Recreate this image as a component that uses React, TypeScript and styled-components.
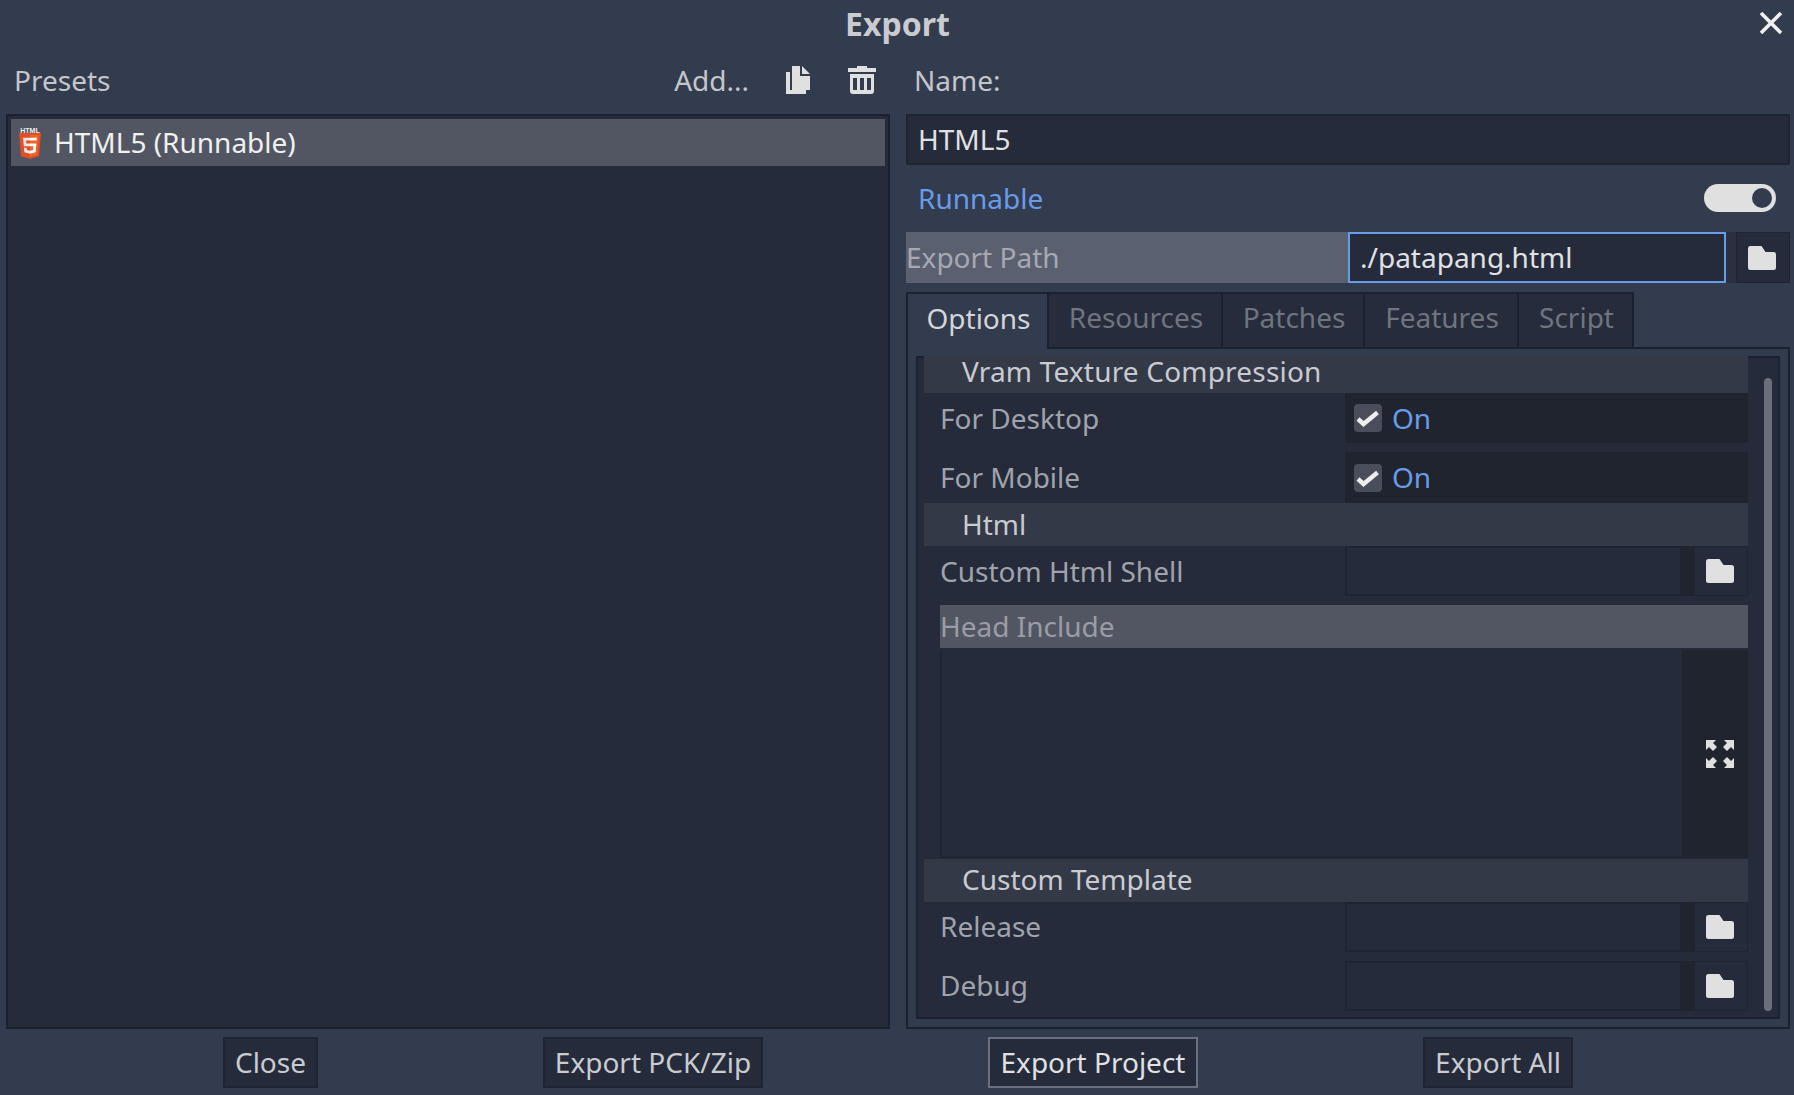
import React from "react";
import styled, { createGlobalStyle } from "styled-components";

const Global = createGlobalStyle`
  html, body { margin: 0; padding: 0; background: #333b4f; }
  * { box-sizing: border-box; }
`;

const Page = styled.div`
  width: 1794px;
  height: 1095px;
  background: #333b4f;
  color: #d4d5d8;
  font-family: "Noto Sans", sans-serif;
  font-size: 28px;
  line-height: 36px;
  display: flex;
  flex-direction: column;
  overflow: hidden;
`;

const TitleBar = styled.div`
  height: 48px;
  display: grid;
  grid-template-columns: 1fr auto 1fr;
  align-items: center;
`;

const Title = styled.div`
  grid-column: 2;
  font-weight: 700;
  font-size: 32px;
  color: #c9cbd0;
  padding: 0 0 1px 1px;
`;

const CloseButton = styled.div`
  justify-self: end;
  display: flex;
  margin: -2px 11px 0 0;
`;

const Main = styled.div`
  display: grid;
  grid-template-columns: 884px 884px;
  column-gap: 16px;
  padding: 0 4px 0 6px;
  height: 981px;
`;

const Column = styled.div`
  display: flex;
  flex-direction: column;
  min-width: 0;
`;

const HeaderRow = styled.div`
  height: 66px;
  display: flex;
  align-items: center;
  padding: 0 0 2px 8px;
  color: #c4c6cb;
`;

const NameLabel = styled.div`
  height: 66px;
  display: flex;
  align-items: center;
  padding: 0 0 2px 8px;
  color: #c4c6cb;
`;

const Spacer = styled.div`
  flex: 1;
`;

const AddLabel = styled.div`
  margin-right: 37px;
`;

const ToolIcon = styled.div<{ $right: number }>`
  display: flex;
  margin-right: ${(p) => p.$right}px;
`;

const ListPanel = styled.div`
  flex: 1;
  background: #252b3b;
  border: 2px solid #1c2130;
  padding: 3px;
`;

const PresetItem = styled.div`
  height: 47px;
  background: #525663;
  display: flex;
  align-items: center;
  padding: 0 0 2px 7px;
  color: #f0f0f1;
  gap: 12px;
`;

const LogoSlot = styled.div`
  display: flex;
  margin-bottom: -2px;
`;

const LineInput = styled.div`
  height: 51px;
  background: #252b3b;
  border: 2px solid #1f2433;
  display: flex;
  align-items: center;
  padding: 0 0 2px 10px;
  color: #e0e1e4;
`;

const RunnableRow = styled.div`
  height: 67px;
  display: flex;
  align-items: center;
  justify-content: space-between;
  padding: 0 14px 2px 12px;
  color: #699ce8;
`;

const Toggle = styled.div`
  width: 72px;
  height: 28px;
  border-radius: 14px;
  background: #e0e0e0;
  display: flex;
  align-items: center;
  justify-content: flex-end;
  padding-right: 4px;
`;

const ToggleKnob = styled.div`
  width: 20px;
  height: 20px;
  border-radius: 50%;
  background: #333b4f;
`;

const PathRow = styled.div`
  height: 51px;
  display: grid;
  grid-template-columns: 442px 378px 10px 54px;
`;

const PathLabel = styled.div`
  background: #5b6071;
  color: #a6a9b1;
  display: flex;
  align-items: center;
  padding-bottom: 2px;
`;

const PathInput = styled.div`
  background: #252b3b;
  border: 2px solid #699ce8;
  display: flex;
  align-items: center;
  padding: 0 0 2px 10px;
  color: #e0e1e4;
`;

const ButtonGap = styled.div`
  background: #2a3041;
`;

const IconButton = styled.div`
  background: #252b3b;
  border: 1px solid #1f2433;
  display: flex;
  align-items: center;
  justify-content: center;
  padding-right: 2px;
`;

const TabBar = styled.div`
  display: flex;
  height: 55px;
  margin-top: 9px;
`;

const Tab = styled.div<{ $active?: boolean; $w: number }>`
  width: ${(p) => p.$w}px;
  background: ${(p) => (p.$active ? "#333b4f" : "#262c3c")};
  color: ${(p) => (p.$active ? "#d4d5d8" : "#6f7480")};
  border: 2px solid #1c2130;
  border-bottom: 0;
  border-left-width: ${(p) => (p.$active ? 2 : 0)}px;
  display: flex;
  align-items: center;
  justify-content: center;
  padding: 0 0 8px 2px;
  position: relative;
  margin-bottom: ${(p) => (p.$active ? -2 : 0)}px;
  z-index: ${(p) => (p.$active ? 1 : 0)};
`;

const TabPanel = styled.div`
  flex: 1;
  border: 2px solid #1c2130;
  padding: 7px 8px 8px;
  display: flex;
  min-height: 0;
`;

const Inner = styled.div`
  flex: 1;
  display: flex;
  background: #252b3b;
  border: 2px solid #1c2130;
  padding: 0 6px 0 6px;
  min-width: 0;
`;

const PropertyList = styled.div`
  width: 824px;
  margin-top: -2px;
  display: flex;
  flex-direction: column;
`;

const SectionHeader = styled.div<{ $h: number; $pb: number; $spacing?: number }>`
  height: ${(p) => p.$h}px;
  flex: none;
  background: #343948;
  color: #c9cbd0;
  display: flex;
  align-items: center;
  letter-spacing: ${(p) => p.$spacing ?? 0}px;
  padding: 0 0 ${(p) => p.$pb}px 38px;
`;

const PropRow = styled.div<{ $h: number; $mt?: number }>`
  height: ${(p) => p.$h}px;
  margin-top: ${(p) => p.$mt ?? 0}px;
  flex: none;
  display: grid;
  grid-template-columns: 421px 403px;
`;

const PropLabel = styled.div<{ $pb: number }>`
  display: flex;
  align-items: center;
  padding: 0 0 ${(p) => p.$pb}px 16px;
  color: #a0a3ab;
`;

const CheckValue = styled.div`
  background: #20242f;
  display: flex;
  align-items: center;
  padding-left: 9px;
  color: #699ce8;
  gap: 10px;
`;

const OnLabel = styled.span`
  margin-bottom: 1px;
`;

const CheckBox = styled.div`
  width: 28px;
  height: 28px;
  border-radius: 4px;
  background: #4a4e5b;
  display: flex;
`;

const PathValue = styled.div`
  display: grid;
  grid-template-columns: 337px 12px 54px;
  background: #20242f;
`;

const EmptyInput = styled.div`
  background: #252b3b;
  border: 2px solid #1f2433;
  grid-column: 1;
`;

const SmallIconButton = styled.div`
  grid-column: 3;
  background: #252b3b;
  border: 1px solid #1f2433;
  display: flex;
  align-items: center;
  justify-content: center;
  padding-right: 2px;
`;

const BlockLabel = styled.div`
  height: 43px;
  margin: 9px 0 0 16px;
  flex: none;
  background: #525663;
  color: #9a9da5;
  display: flex;
  align-items: center;
  padding-bottom: 2px;
`;

const TextAreaRow = styled.div`
  height: 208px;
  margin: 2px 0 1px 16px;
  flex: none;
  display: grid;
  grid-template-columns: 742px 66px;
`;

const TextArea = styled.div`
  background: #252b3b;
  border-left: 2px solid #1f2433;
  border-bottom: 2px solid #1f2433;
`;

const TextAreaSide = styled.div`
  background: #20242f;
  display: flex;
  align-items: center;
  justify-content: center;
  padding-left: 10px;
`;

const Scrollbar = styled.div`
  width: 8px;
  margin: 20px 0 6px 16px;
  border-radius: 4px;
  background: #6b6f7a;
`;

const Footer = styled.div`
  display: flex;
  gap: 225px;
  padding-left: 223px;
  margin-top: 8px;
`;

const FooterButton = styled.div<{ $w: number; $focus?: boolean }>`
  width: ${(p) => p.$w}px;
  height: 51px;
  background: #252b3b;
  border: 2px solid ${(p) => (p.$focus ? "#6b7080" : "#1f2433")};
  color: ${(p) => (p.$focus ? "#e0e1e4" : "#c9cbd0")};
  display: flex;
  align-items: center;
  justify-content: center;
  padding-bottom: 2px;
`;

const Folder = () => (
  <svg width="28" height="24" viewBox="0 0 28 24">
    <path fill="#e0e0e0" d="M0 2.5A2.5 2.5 0 0 1 2.500 0H13.500L17.500 6H25.500A2.500 2.500 0 0 1 28 8.500V21.500A2.500 2.500 0 0 1 25.500 24H2.500A2.500 2.500 0 0 1 0 21.500z" />
  </svg>
);

const CloseIcon = () => (
  <svg width="24" height="22" viewBox="0 0 24 22">
    <path stroke="#f0f0f0" strokeWidth="3.6" d="M2 1l20 20M22 1L2 21" />
  </svg>
);

const CopyIcon = () => (
  <svg width="24" height="28" viewBox="0 0 24 28">
    <path fill="#e0e0e0" d="M6 0h8v10h10v14H6zM16 0l8 8h-8zM0 6h4v18h16v4H0z" />
  </svg>
);

const TrashIcon = () => (
  <svg width="28" height="28" viewBox="0 0 28 28">
    <path fill="#e0e0e0" d="M9 0h10v2h9v4H0V2h9z" />
    <path
      fill="#e0e0e0"
      fillRule="evenodd"
      d="M2 8h24v17a3 3 0 0 1-3 3H5a3 3 0 0 1-3-3zM5 12v12h4V12zM12 12v12h4V12zM19 12v12h4V12z"
    />
  </svg>
);

const CheckMark = () => (
  <svg width="28" height="28" viewBox="0 0 28 28">
    <path fill="none" stroke="#eeeeee" strokeWidth="4.4" d="M4 15l5.500 5L23.500 8.500" />
  </svg>
);

const ExpandIcon = () => (
  <svg width="28" height="28" viewBox="0 0 28 28">
    <g fill="#e0e0e0">
      <path d="M0 0h10L7 3l4 4-4 4-4-4-3 3z" />
      <path d="M28 0H18l3 3-4 4 4 4 4-4 3 3z" />
      <path d="M0 28h10l-3-3 4-4-4-4-4 4-3-3z" />
      <path d="M28 28H18l3-3-4-4 4-4 4 4 3-3z" />
    </g>
  </svg>
);

const Html5Logo = () => (
  <svg width="24" height="32" viewBox="0 0 24 32">
    <text x="12" y="5.500" textAnchor="middle" fontFamily="Liberation Sans" fontWeight="700" fontSize="7" fill="#eeeeee">
      HTML
    </text>
    <g transform="translate(1 6) scale(.0606 .0625) translate(-74.6 -100.6)">
      <polygon fill="#E44D26" points="107.644,470.877 74.633,100.620 437.367,100.620 404.321,470.819 255.778,512" />
      <polygon fill="#F16529" points="256,480.523 376.030,447.246 404.270,130.894 256,130.894" />
      <polygon
        fill="#EBEBEB"
        points="256,268.217 195.910,268.217 191.760,221.716 256,221.716 256,176.305 142.132,176.305 143.219,188.488 154.380,313.627 256,313.627"
      />
      <polygon
        fill="#EBEBEB"
        points="256,386.153 255.801,386.209 205.227,372.551 201.994,336.333 156.409,336.333 162.771,407.634 255.791,433.457 256,433.399"
      />
      <polygon
        fill="#FFFFFF"
        points="255.843,268.217 255.843,313.627 311.761,313.627 306.490,372.521 255.843,386.194 255.843,433.435 348.937,407.634 360.291,280.411 361.399,268.217"
      />
      <polygon fill="#FFFFFF" points="255.843,176.305 255.843,221.716 365.531,221.716 368.511,188.488 369.597,176.305" />
    </g>
  </svg>
);

const checkProps = [
  { label: "For Desktop", pb: 0 },
  { label: "For Mobile", pb: 2 },
];

const PathProp = ({ label, h, mt, pb }: { label: string; h: number; mt?: number; pb: number }) => (
  <PropRow $h={h} $mt={mt}>
    <PropLabel $pb={pb}>{label}</PropLabel>
    <PathValue>
      <EmptyInput />
      <SmallIconButton>
        <Folder />
      </SmallIconButton>
    </PathValue>
  </PropRow>
);

export default function App() {
  return (
    <Page>
      <Global />
      <TitleBar>
        <Title>Export</Title>
        <CloseButton>
          <CloseIcon />
        </CloseButton>
      </TitleBar>
      <Main>
        <Column>
          <HeaderRow>
            Presets
            <Spacer />
            <AddLabel>Add...</AddLabel>
            <ToolIcon $right={38}>
              <CopyIcon />
            </ToolIcon>
            <ToolIcon $right={14}>
              <TrashIcon />
            </ToolIcon>
          </HeaderRow>
          <ListPanel>
            <PresetItem>
              <LogoSlot>
                <Html5Logo />
              </LogoSlot>
              HTML5 (Runnable)
            </PresetItem>
          </ListPanel>
        </Column>
        <Column>
          <NameLabel>Name:</NameLabel>
          <LineInput>HTML5</LineInput>
          <RunnableRow>
            Runnable
            <Toggle>
              <ToggleKnob />
            </Toggle>
          </RunnableRow>
          <PathRow>
            <PathLabel>Export Path</PathLabel>
            <PathInput>./patapang.html</PathInput>
            <ButtonGap />
            <IconButton>
              <Folder />
            </IconButton>
          </PathRow>
          <TabBar>
            <Tab $active $w={143}>Options</Tab>
            <Tab $w={174}>Resources</Tab>
            <Tab $w={142}>Patches</Tab>
            <Tab $w={154}>Features</Tab>
            <Tab $w={115}>Script</Tab>
          </TabBar>
          <TabPanel>
            <Inner>
              <PropertyList>
                <SectionHeader $h={37} $pb={7} $spacing={0.19}>Vram Texture Compression</SectionHeader>
                {checkProps.map(({ label, pb }, i) => (
                  <PropRow key={label} $h={i === 0 ? 50 : 51} $mt={i === 0 ? 0 : 9}>
                    <PropLabel $pb={pb}>{label}</PropLabel>
                    <CheckValue>
                      <CheckBox>
                        <CheckMark />
                      </CheckBox>
                      <OnLabel>On</OnLabel>
                    </CheckValue>
                  </PropRow>
                ))}
                <SectionHeader $h={43} $pb={2}>Html</SectionHeader>
                <PathProp label="Custom Html Shell" h={50} pb={0} />
                <BlockLabel>Head Include</BlockLabel>
                <TextAreaRow>
                  <TextArea />
                  <TextAreaSide>
                    <ExpandIcon />
                  </TextAreaSide>
                </TextAreaRow>
                <SectionHeader $h={43} $pb={3}>Custom Template</SectionHeader>
                <PathProp label="Release" h={50} pb={2} />
                <PathProp label="Debug" h={50} mt={9} pb={2} />
              </PropertyList>
              <Scrollbar />
            </Inner>
          </TabPanel>
        </Column>
      </Main>
      <Footer>
        <FooterButton $w={95}>Close</FooterButton>
        <FooterButton $w={220}>Export PCK/Zip</FooterButton>
        <FooterButton $w={210} $focus>Export Project</FooterButton>
        <FooterButton $w={150}>Export All</FooterButton>
      </Footer>
    </Page>
  );
}
